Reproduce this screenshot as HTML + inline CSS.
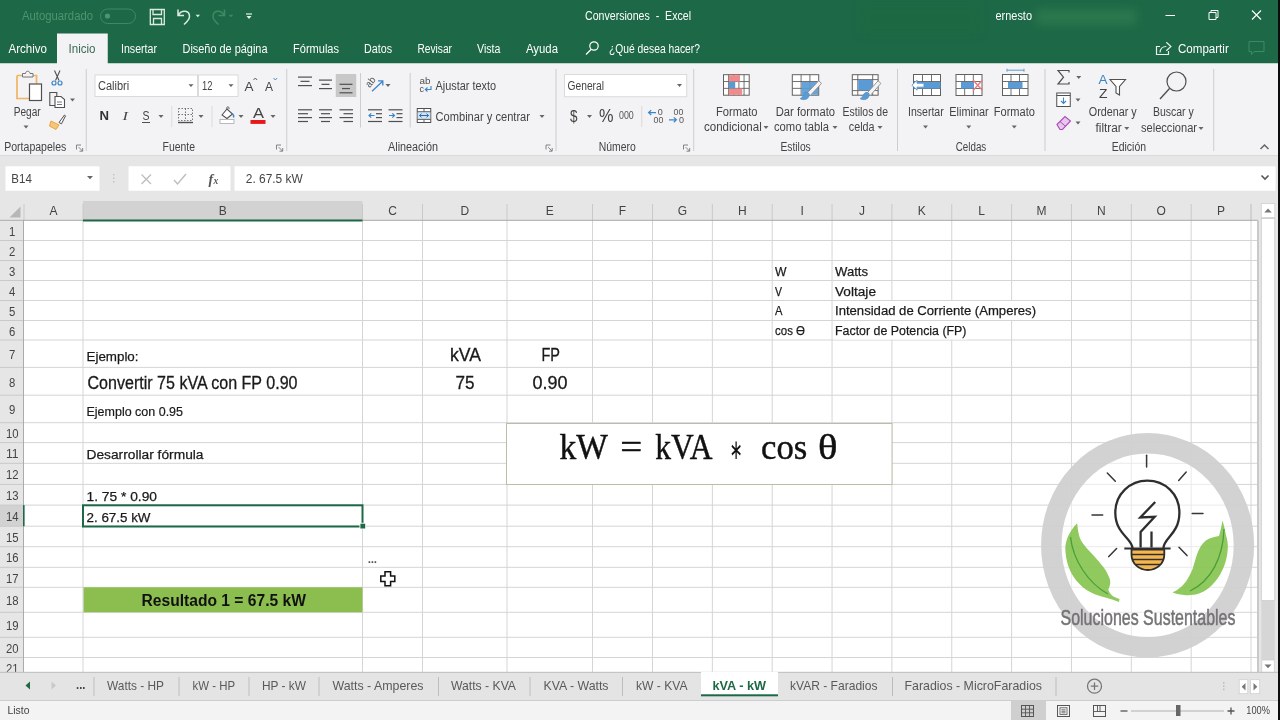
<!DOCTYPE html>
<html lang="es">
<head>
<meta charset="utf-8">
<title>Conversiones - Excel</title>
<style>
html,body{margin:0;padding:0;width:1280px;height:720px;overflow:hidden;background:#fff}
svg{display:block;position:absolute;left:-10px;top:-10px;filter:blur(0.55px)}
svg text{font-family:"Liberation Sans",sans-serif;white-space:pre}
</style>
</head>
<body>
<svg width="1300" height="740" viewBox="-10 -10 1300 740">
<rect x="-10" y="-10" width="1300" height="740" fill="#ffffff" />
<rect x="-10" y="-10" width="1300" height="73.5" fill="#1d6846" />
<defs><filter id="bl" x="-20%" y="-50%" width="140%" height="200%"><feGaussianBlur stdDeviation="4"/></filter></defs>
<rect x="1036" y="9" width="100" height="16" fill="#2a774e" filter="url(#bl)"/>
<rect x="860" y="4" width="120" height="30" fill="#1e6a40" filter="url(#bl)" opacity="0.4"/>
<rect x="-10" y="63.5" width="1300" height="92" fill="#f3f2f4" />
<rect x="-10" y="155.5" width="1300" height="65" fill="#e6e6e6" />
<line x1="-10" y1="155.5" x2="1290" y2="155.5" stroke="#dadada" stroke-width="1" />
<text x="22" y="20" font-size="12" fill="#4f9470" textLength="71" lengthAdjust="spacingAndGlyphs" >Autoguardado</text>
<rect x="100.5" y="9" width="35" height="14.5" rx="7.25" fill="none" stroke="#3f8a63" stroke-width="1"/>
<circle cx="107.5" cy="16" r="2.6" fill="#4f9470"/>
<path d="M150.3 9.5h14v15h-14z M153 9.5v5h8.5v-5 M153.5 24.5v-6h8v6" stroke="#dcebe2" fill="none" stroke-width="1.3" />
<path d="M178 9.5v6h6 M178.5 15c3-5.5 11-5 11 1.5c0 3-2 5-5.5 8" stroke="#dcebe2" fill="none" stroke-width="1.5" />
<path d="M195.55 14.7h4.5l-2.25 2.6z" fill="#dcebe2"/>
<path d="M224.5 9.5v6h-6 M224 15c-3-5.5-11-5-11 1.5c0 3 2 5 5.5 8" stroke="#3f8a63" fill="none" stroke-width="1.5" />
<path d="M228.75 14.7h4.5l-2.25 2.6z" fill="#3f8a63"/>
<line x1="246" y1="14" x2="252" y2="14" stroke="#e8f1ec" stroke-width="1.2" />
<path d="M246.5 16.1h5l-2.5 2.8z" fill="#e8f1ec"/>
<text x="585" y="20" font-size="12" fill="#ffffff" textLength="106" lengthAdjust="spacingAndGlyphs" >Conversiones  -  Excel</text>
<text x="995.5" y="20" font-size="12" fill="#ffffff" textLength="36.5" lengthAdjust="spacingAndGlyphs" >ernesto</text>
<line x1="1165.5" y1="15.5" x2="1175" y2="15.5" stroke="#ffffff" stroke-width="1" />
<path d="M1209 12.5h7v7h-7z M1211 12.5v-2h7v7h-2" stroke="#ffffff" fill="none" stroke-width="1" />
<path d="M1252 10.5l9 9 M1261 10.5l-9 9" stroke="#ffffff" fill="none" stroke-width="1.1" />
<rect x="57" y="33.5" width="50.75" height="31" fill="#f3f2f4" />
<text x="8.5" y="52.8" font-size="12" fill="#ffffff" textLength="38.5" lengthAdjust="spacingAndGlyphs" >Archivo</text>
<text x="68.5" y="52.8" font-size="12" fill="#3b6b55" textLength="27" lengthAdjust="spacingAndGlyphs" >Inicio</text>
<text x="121" y="52.8" font-size="12" fill="#ffffff" textLength="36" lengthAdjust="spacingAndGlyphs" >Insertar</text>
<text x="182.5" y="52.8" font-size="12" fill="#ffffff" textLength="85" lengthAdjust="spacingAndGlyphs" >Diseño de página</text>
<text x="293" y="52.8" font-size="12" fill="#ffffff" textLength="46" lengthAdjust="spacingAndGlyphs" >Fórmulas</text>
<text x="364" y="52.8" font-size="12" fill="#ffffff" textLength="28" lengthAdjust="spacingAndGlyphs" >Datos</text>
<text x="417.5" y="52.8" font-size="12" fill="#ffffff" textLength="34.5" lengthAdjust="spacingAndGlyphs" >Revisar</text>
<text x="477" y="52.8" font-size="12" fill="#ffffff" textLength="23.5" lengthAdjust="spacingAndGlyphs" >Vista</text>
<text x="526" y="52.8" font-size="12" fill="#ffffff" textLength="32" lengthAdjust="spacingAndGlyphs" >Ayuda</text>
<text x="609" y="52.8" font-size="12" fill="#ffffff" textLength="91" lengthAdjust="spacingAndGlyphs" >¿Qué desea hacer?</text>
<circle cx="594" cy="46" r="4.2" fill="none" stroke="#ffffff" stroke-width="1.2"/>
<line x1="591" y1="49.5" x2="586" y2="54.5" stroke="#ffffff" stroke-width="1.3" />
<path d="M1160 46.500h-3.500v8h12v-3.500 M1160 52.500c0.300-4 2.500-6 6.300-6 M1166.300 42.300l4.600 4.200l-4.600 4.200" stroke="#e6f2ea" fill="none" stroke-width="1.2" />
<text x="1178" y="53" font-size="12" fill="#ffffff" textLength="50.75" lengthAdjust="spacingAndGlyphs" >Compartir</text>
<path d="M1249 41.5h15v10h-10l-2.5 3v-3h-2.5z" stroke="#3f8a63" fill="none" stroke-width="1" />
<rect x="5.5" y="166.25" width="94" height="24.5" fill="#ffffff" />
<text x="11.3" y="183.3" font-size="12" fill="#444444" textLength="20.5" lengthAdjust="spacingAndGlyphs" >B14</text>
<path d="M87.0 176.1h6l-3.0 3.2z" fill="#666"/>
<rect x="113.3" y="174" width="1" height="1.4" fill="#b0b0b0" />
<rect x="113.3" y="177.5" width="1" height="1.4" fill="#b0b0b0" />
<rect x="113.3" y="181" width="1" height="1.4" fill="#b0b0b0" />
<rect x="128.5" y="166.25" width="102" height="24.5" fill="#ffffff" />
<path d="M141.5 174.5l9.5 9.5 M151 174.5l-9.5 9.5" stroke="#bdbdbd" fill="none" stroke-width="1.3" />
<path d="M174 180l3.5 4l8.5-10" stroke="#bdbdbd" fill="none" stroke-width="1.4" />
<text x="208.5" y="183.5" font-size="14" fill="#555" font-weight="bold" style='font-family:"Liberation Serif",serif' font-style="italic" >f</text>
<text x="213.5" y="184" font-size="9.5" fill="#555" font-weight="bold" style='font-family:"Liberation Serif",serif' font-style="italic" >x</text>
<rect x="234.5" y="166.25" width="1041" height="24.5" fill="#ffffff" />
<text x="245.75" y="183.3" font-size="12" fill="#444444" textLength="57" lengthAdjust="spacingAndGlyphs" >2. 67.5 kW</text>
<path d="M1261.5 175.5l3.5 3.5l3.5-3.5" stroke="#555" fill="none" stroke-width="1.6" />
<path d="M17 75.5h5.5 M31.5 75.5h5v8 M17 75.5v23h12" stroke="#efb560" fill="none" stroke-width="1.7" />
<path d="M22.5 77v-3.5h3c0-3 4.500-3 4.500 0h3v3.500z" stroke="#777" fill="#f3f3f3" stroke-width="1" />
<rect x="29.5" y="84" width="12" height="16.5" fill="#ffffff" stroke="#505050" stroke-width="1.2"/>
<text x="13.75" y="115.5" font-size="12" fill="#444444" textLength="27" lengthAdjust="spacingAndGlyphs" >Pegar</text>
<path d="M23.5 125.6h5l-2.5 2.8z" fill="#666"/>
<path d="M54.5 70.500l4.500 10 M60 70.500l-4.500 10" stroke="#505050" fill="none" stroke-width="1.1" />
<circle cx="54" cy="83" r="2" fill="none" stroke="#3b86c9" stroke-width="1.2"/><circle cx="60" cy="83" r="2" fill="none" stroke="#3b86c9" stroke-width="1.2"/>
<path d="M49.8 92.500h7v13h-7z" stroke="#505050" fill="none" stroke-width="1.1" />
<path d="M55 96.500h6l3.500 3v8h-9.500z" stroke="#505050" fill="#ffffff" stroke-width="1.1" />
<line x1="57" y1="102" x2="62" y2="102" stroke="#505050" stroke-width="0.8" />
<line x1="57" y1="104.5" x2="62" y2="104.5" stroke="#505050" stroke-width="0.8" />
<path d="M70.0 98.6h5l-2.5 2.8z" fill="#666"/>
<path d="M51 121l8 4l-3 4.500l-6.500-3.500z" stroke="#e8a33d" fill="#f6c777" stroke-width="1" />
<path d="M59 122.500l5.500-7.500l1 0.800l-4 8z" stroke="#505050" fill="#fff" stroke-width="1" />
<text x="4.25" y="150.7" font-size="12" fill="#444444" textLength="62" lengthAdjust="spacingAndGlyphs" >Portapapeles</text>
<path d="M76.5 149.5v-4.5h4.5 M78.7 147.2l3.8 3.8 M82.7 148v3.2h-3.2" stroke="#777" fill="none" stroke-width="0.9" />
<line x1="86.25" y1="69" x2="86.25" y2="151" stroke="#cdcdcd" stroke-width="1" />
<rect x="95" y="75" width="102.5" height="21.5" fill="#ffffff" stroke="#dadada" stroke-width="1"/>
<text x="98" y="90" font-size="12" fill="#444444" textLength="31.25" lengthAdjust="spacingAndGlyphs" >Calibri</text>
<path d="M188.5 84.3h5l-2.5 2.8z" fill="#666"/>
<rect x="198.5" y="75" width="39.5" height="21.5" fill="#ffffff" stroke="#dadada" stroke-width="1"/>
<text x="202" y="90" font-size="12" fill="#444444" textLength="10.5" lengthAdjust="spacingAndGlyphs" >12</text>
<path d="M228.5 84.3h5l-2.5 2.8z" fill="#666"/>
<text x="244.5" y="91" font-size="13.5" fill="#444444" textLength="9" lengthAdjust="spacingAndGlyphs" >A</text>
<path d="M253.5 80l1.800-2l1.800 2" stroke="#505050" fill="none" stroke-width="0.9" />
<text x="265" y="91" font-size="12" fill="#444444" textLength="8" lengthAdjust="spacingAndGlyphs" >A</text>
<path d="M273.500 78l1.800 2l1.800-2" stroke="#3b86c9" fill="none" stroke-width="0.9" />
<text x="99.5" y="120" font-size="13" fill="#333" textLength="9.5" lengthAdjust="spacingAndGlyphs" font-weight="bold" >N</text>
<text x="122.5" y="120" font-size="13" fill="#444" textLength="5.5" lengthAdjust="spacingAndGlyphs" style='font-family:"Liberation Serif",serif' font-style="italic" >I</text>
<text x="142.5" y="119.5" font-size="13" fill="#444444" textLength="7" lengthAdjust="spacingAndGlyphs" >S</text>
<line x1="142" y1="122.5" x2="150" y2="122.5" stroke="#505050" stroke-width="1" />
<path d="M158.5 115.1h5l-2.5 2.8z" fill="#666"/>
<line x1="171.75" y1="106" x2="171.75" y2="127" stroke="#dcdcdc" stroke-width="1" />
<rect x="178.5" y="108.5" width="14" height="12" fill="none" stroke="#777" stroke-width="1" stroke-dasharray="1.5 1.5"/>
<path d="M185.5 108.5v12 M178.5 114.5h14" stroke="#777" fill="none" stroke-width="1" stroke-dasharray="1.5 1.5"/>
<line x1="178" y1="122.5" x2="193" y2="122.5" stroke="#505050" stroke-width="1.4" />
<path d="M198.5 115.1h5l-2.5 2.8z" fill="#666"/>
<line x1="212" y1="106" x2="212" y2="127" stroke="#dcdcdc" stroke-width="1" />
<path d="M222 115l5-6l5.500 5l-5.500 4.500z" stroke="#505050" fill="#fff" stroke-width="1.1" />
<path d="M227 109c-1-3 2.500-3 2 0" stroke="#505050" fill="none" stroke-width="0.9" />
<path d="M232 113.500c1.500 1 2 2.500 1.500 4" stroke="#3b86c9" fill="none" stroke-width="1.4" />
<rect x="220" y="119.5" width="14" height="4" fill="#ffffff" stroke="#aaa" stroke-width="0.8"/>
<path d="M238.5 115.1h5l-2.5 2.8z" fill="#666"/>
<text x="253" y="118.2" font-size="14" fill="#444" textLength="11" lengthAdjust="spacingAndGlyphs" >A</text>
<rect x="250.5" y="120" width="15" height="3.9" fill="#e5191c" />
<path d="M270.5 115.1h5l-2.5 2.8z" fill="#666"/>
<text x="162.5" y="150.7" font-size="12" fill="#444444" textLength="32.5" lengthAdjust="spacingAndGlyphs" >Fuente</text>
<path d="M276.5 149.5v-4.5h4.5 M278.7 147.2l3.8 3.8 M282.7 148v3.2h-3.2" stroke="#777" fill="none" stroke-width="0.9" />
<line x1="286.75" y1="69" x2="286.75" y2="151" stroke="#cdcdcd" stroke-width="1" />
<rect x="298" y="76.5" width="14" height="1.2" fill="#505050" />
<rect x="300.5" y="80.75" width="9" height="1.2" fill="#505050" />
<rect x="298" y="85.0" width="14" height="1.2" fill="#505050" />
<rect x="319" y="79.5" width="13" height="1.2" fill="#505050" />
<rect x="321.5" y="83.75" width="8" height="1.2" fill="#505050" />
<rect x="319" y="88.0" width="13" height="1.2" fill="#505050" />
<rect x="335.75" y="74" width="20.5" height="23" fill="#c8c8c8" />
<rect x="339.5" y="83.7" width="13" height="1.2" fill="#505050" />
<rect x="342.0" y="87.95" width="8" height="1.2" fill="#505050" />
<rect x="339.5" y="92.2" width="13" height="1.2" fill="#505050" />
<line x1="360.5" y1="73" x2="360.5" y2="127.5" stroke="#cdcdcd" stroke-width="1" />
<text x="369.8" y="88.2" font-size="10" fill="#505050" textLength="10.5" lengthAdjust="spacingAndGlyphs" transform="rotate(-52 369.8 88.2)">ab</text>
<path d="M372 91.200l10.400-9.700 M378 80.800h4.800v4.800" stroke="#3b86c9" fill="none" stroke-width="1.3" />
<path d="M385.5 84.1h5l-2.5 2.8z" fill="#666"/>
<line x1="410.2" y1="73" x2="410.2" y2="127.5" stroke="#cdcdcd" stroke-width="1" />
<text x="419.5" y="84" font-size="8.5" fill="#505050" textLength="11" lengthAdjust="spacingAndGlyphs" >ab</text>
<text x="419.5" y="91.5" font-size="8.5" fill="#505050" textLength="4.5" lengthAdjust="spacingAndGlyphs" >c</text>
<path d="M431 86v3.500h-5.500 M427.500 87.500l-2.200 2l2.200 2" stroke="#3b86c9" fill="none" stroke-width="1.1" />
<text x="435.5" y="90" font-size="12" fill="#444444" textLength="60.5" lengthAdjust="spacingAndGlyphs" >Ajustar texto</text>
<rect x="298" y="109.2" width="14" height="1.2" fill="#505050" />
<rect x="298" y="113.10000000000001" width="10" height="1.2" fill="#505050" />
<rect x="298" y="117.0" width="14" height="1.2" fill="#505050" />
<rect x="298" y="120.9" width="10" height="1.2" fill="#505050" />
<rect x="319" y="109.2" width="13" height="1.2" fill="#505050" />
<rect x="321" y="113.10000000000001" width="9" height="1.2" fill="#505050" />
<rect x="319" y="117.0" width="13" height="1.2" fill="#505050" />
<rect x="321" y="120.9" width="9" height="1.2" fill="#505050" />
<rect x="339.5" y="109.2" width="13.5" height="1.2" fill="#505050" />
<rect x="343.5" y="113.10000000000001" width="9.5" height="1.2" fill="#505050" />
<rect x="339.5" y="117.0" width="13.5" height="1.2" fill="#505050" />
<rect x="343.5" y="120.9" width="9.5" height="1.2" fill="#505050" />
<rect x="475" y="109.2" width="0" height="1.2" fill="#505050" />
<rect x="376" y="113.10000000000001" width="6" height="1.2" fill="#505050" />
<rect x="376" y="117.0" width="6" height="1.2" fill="#505050" />
<rect x="475" y="120.9" width="0" height="1.2" fill="#505050" />
<rect x="368" y="109.2" width="14" height="1.2" fill="#505050" />
<rect x="467" y="113.10000000000001" width="0" height="1.2" fill="#505050" />
<rect x="467" y="117.0" width="0" height="1.2" fill="#505050" />
<rect x="368" y="120.9" width="14" height="1.2" fill="#505050" />
<path d="M374.500 115.500h-5.500 M371.200 113.300l-2.200 2.200l2.200 2.200" stroke="#3b86c9" fill="none" stroke-width="1.2" />
<rect x="495.5" y="109.2" width="0" height="1.2" fill="#505050" />
<rect x="396.5" y="113.10000000000001" width="6" height="1.2" fill="#505050" />
<rect x="396.5" y="117.0" width="6" height="1.2" fill="#505050" />
<rect x="495.5" y="120.9" width="0" height="1.2" fill="#505050" />
<rect x="388.5" y="109.2" width="14" height="1.2" fill="#505050" />
<rect x="487.5" y="113.10000000000001" width="0" height="1.2" fill="#505050" />
<rect x="487.5" y="117.0" width="0" height="1.2" fill="#505050" />
<rect x="388.5" y="120.9" width="14" height="1.2" fill="#505050" />
<path d="M389 115.500h5.500 M392.300 113.300l2.200 2.200l-2.200 2.200" stroke="#3b86c9" fill="none" stroke-width="1.2" />
<rect x="417.250" y="108.500" width="13.500" height="14" fill="#ffffff" stroke="#505050" stroke-width="1"/>
<rect x="417.75" y="111.8" width="12.5" height="7.6" fill="#cfe3f5" />
<path d="M417.250 111.700h13.500 M417.250 119.400h13.500 M424 108.500v3.200 M424 119.400v3.100" stroke="#505050" fill="none" stroke-width="0.9" />
<path d="M419.500 115.500h9 M421.500 113.700l-2 1.800l2 1.800 M426.500 113.700l2 1.800l-2 1.800" stroke="#2b6cb0" fill="none" stroke-width="1" />
<text x="435.5" y="120.75" font-size="12" fill="#444444" textLength="94.5" lengthAdjust="spacingAndGlyphs" >Combinar y centrar</text>
<path d="M539.5 115.1h5l-2.5 2.8z" fill="#666"/>
<text x="388" y="150.7" font-size="12" fill="#444444" textLength="50" lengthAdjust="spacingAndGlyphs" >Alineación</text>
<path d="M546 149.5v-4.5h4.5 M548.2 147.2l3.8 3.8 M552.2 148v3.2h-3.2" stroke="#777" fill="none" stroke-width="0.9" />
<line x1="556" y1="69" x2="556" y2="151" stroke="#cdcdcd" stroke-width="1" />
<rect x="564.5" y="74.5" width="122.25" height="22.25" fill="#ffffff" stroke="#dadada" stroke-width="1"/>
<text x="567.5" y="90" font-size="12" fill="#444444" textLength="36.5" lengthAdjust="spacingAndGlyphs" >General</text>
<path d="M677.0 84.1h5l-2.5 2.8z" fill="#666"/>
<text x="570" y="121.7" font-size="17" fill="#444" textLength="7.5" lengthAdjust="spacingAndGlyphs" >$</text>
<path d="M587.0 115.1h5l-2.5 2.8z" fill="#666"/>
<text x="599" y="121.8" font-size="17.5" fill="#444" textLength="14.5" lengthAdjust="spacingAndGlyphs" >%</text>
<text x="619" y="119" font-size="10" fill="#555" textLength="14.75" lengthAdjust="spacingAndGlyphs" >000</text>
<line x1="641.75" y1="106" x2="641.75" y2="127" stroke="#d8d8d8" stroke-width="1" />
<path d="M656 112.600h-7.500 M651.200 110.200l-2.600 2.400l2.600 2.400" stroke="#3b86c9" fill="none" stroke-width="1.2" />
<text x="657.8" y="115" font-size="9" fill="#555" textLength="5" lengthAdjust="spacingAndGlyphs" >0</text>
<text x="653.5" y="123.2" font-size="9" fill="#555" textLength="9.8" lengthAdjust="spacingAndGlyphs" >00</text>
<text x="673.5" y="115" font-size="9" fill="#555" textLength="9.8" lengthAdjust="spacingAndGlyphs" >00</text>
<text x="679" y="123.2" font-size="9" fill="#555" textLength="5" lengthAdjust="spacingAndGlyphs" >0</text>
<path d="M669 119.800h7.500 M673.800 117.400l2.600 2.400l-2.600 2.400" stroke="#3b86c9" fill="none" stroke-width="1.2" />
<text x="598.75" y="150.7" font-size="12" fill="#444444" textLength="37" lengthAdjust="spacingAndGlyphs" >Número</text>
<path d="M683.5 149.5v-4.5h4.5 M685.7 147.2l3.8 3.8 M689.7 148v3.2h-3.2" stroke="#777" fill="none" stroke-width="0.9" />
<line x1="693.75" y1="69" x2="693.75" y2="151" stroke="#cdcdcd" stroke-width="1" />
<rect x="723.5" y="74.7" width="25.7" height="20.5" fill="#ffffff" stroke="#606060" stroke-width="1"/>
<line x1="728.64" y1="74.7" x2="728.64" y2="95.2" stroke="#606060" stroke-width="0.9" />
<line x1="733.78" y1="74.7" x2="733.78" y2="95.2" stroke="#606060" stroke-width="0.9" />
<line x1="738.92" y1="74.7" x2="738.92" y2="95.2" stroke="#606060" stroke-width="0.9" />
<line x1="744.06" y1="74.7" x2="744.06" y2="95.2" stroke="#606060" stroke-width="0.9" />
<line x1="723.5" y1="81.53333333333333" x2="749.2" y2="81.53333333333333" stroke="#606060" stroke-width="0.9" />
<line x1="723.5" y1="88.36666666666667" x2="749.2" y2="88.36666666666667" stroke="#606060" stroke-width="0.9" />
<rect x="728.9" y="75.2" width="11" height="6.4" fill="#f28a8c" />
<rect x="728.9" y="88.6" width="13.3" height="6.2" fill="#f28a8c" />
<rect x="728.9" y="81.8" width="6.3" height="6.6" fill="#5b9bd5" />
<text x="716" y="115.5" font-size="12" fill="#444444" textLength="41.5" lengthAdjust="spacingAndGlyphs" >Formato</text>
<text x="704" y="131" font-size="12" fill="#444444" textLength="57.75" lengthAdjust="spacingAndGlyphs" >condicional</text>
<path d="M763.5 126.1h5l-2.5 2.8z" fill="#666"/>
<rect x="792.3" y="74.7" width="26.4" height="20.5" fill="#ffffff" stroke="#606060" stroke-width="1"/>
<line x1="801.0999999999999" y1="74.7" x2="801.0999999999999" y2="95.2" stroke="#606060" stroke-width="0.9" />
<line x1="809.9" y1="74.7" x2="809.9" y2="95.2" stroke="#606060" stroke-width="0.9" />
<line x1="792.3" y1="81.53333333333333" x2="818.6999999999999" y2="81.53333333333333" stroke="#606060" stroke-width="0.9" />
<line x1="792.3" y1="88.36666666666667" x2="818.6999999999999" y2="88.36666666666667" stroke="#606060" stroke-width="0.9" />
<rect x="801.6" y="82" width="16.6" height="12.7" fill="#5b9bd5" opacity="0.92"/>
<path d="M818.6999999999999 80.8L821.5 83.4L810.0 95.8L807.0 93.19999999999999z" stroke="#8c8c8c" fill="#f4f4f4" stroke-width="0.9" />
<path d="M809.4 94.2c-1-2-3.500-2.500-5-1c-1.500 1.500-1.500 4-4.400 5.500c4 2 9 1 9.400-4.500z" stroke="#4a86c0" fill="#5b9bd5" stroke-width="0.5" />
<text x="775.75" y="115.5" font-size="12" fill="#444444" textLength="59.25" lengthAdjust="spacingAndGlyphs" >Dar formato</text>
<text x="774" y="131" font-size="12" fill="#444444" textLength="55" lengthAdjust="spacingAndGlyphs" >como tabla</text>
<path d="M832.5 126.1h5l-2.5 2.8z" fill="#666"/>
<rect x="852.300" y="74.700" width="25.800" height="20.500" fill="#ffffff" stroke="#606060" stroke-width="1"/>
<path d="M857.800 74.700v20.500 M872.700 74.700v20.500 M852.300 79.600h25.800 M852.300 90.600h25.800" stroke="#606060" fill="none" stroke-width="0.9" />
<rect x="858.2" y="80" width="14.1" height="10.2" fill="#5b9bd5" />
<path d="M878.1 80.8L880.9000000000001 83.4L870.0 95.8L867.0 93.19999999999999z" stroke="#8c8c8c" fill="#f4f4f4" stroke-width="0.9" />
<path d="M869.4 94.2c-1-2-3.500-2.500-5-1c-1.500 1.500-1.500 4-4.400 5.500c4 2 9 1 9.400-4.500z" stroke="#4a86c0" fill="#5b9bd5" stroke-width="0.5" />
<text x="842.5" y="115.5" font-size="12" fill="#444444" textLength="45.5" lengthAdjust="spacingAndGlyphs" >Estilos de</text>
<text x="848.75" y="131" font-size="12" fill="#444444" textLength="25.75" lengthAdjust="spacingAndGlyphs" >celda</text>
<path d="M877.5 126.1h5l-2.5 2.8z" fill="#666"/>
<text x="780.5" y="150.7" font-size="12" fill="#444444" textLength="30.25" lengthAdjust="spacingAndGlyphs" >Estilos</text>
<line x1="897.5" y1="69" x2="897.5" y2="151" stroke="#cdcdcd" stroke-width="1" />
<rect x="913.5" y="74.5" width="27" height="21" fill="#ffffff" stroke="#606060" stroke-width="1"/>
<line x1="922.5" y1="74.5" x2="922.5" y2="95.5" stroke="#606060" stroke-width="0.9" />
<line x1="931.5" y1="74.5" x2="931.5" y2="95.5" stroke="#606060" stroke-width="0.9" />
<line x1="913.5" y1="81.5" x2="940.5" y2="81.5" stroke="#606060" stroke-width="0.9" />
<line x1="913.5" y1="88.5" x2="940.5" y2="88.5" stroke="#606060" stroke-width="0.9" />
<rect x="917" y="82" width="23.5" height="6.5" fill="#5b9bd5" />
<path d="M912 85.200l5-5v3h7v4h-7v3z" stroke="#5b9bd5" fill="#ffffff" stroke-width="1" />
<text x="908" y="115.5" font-size="12" fill="#444444" textLength="35.75" lengthAdjust="spacingAndGlyphs" >Insertar</text>
<path d="M923.0 125.6h5l-2.5 2.8z" fill="#666"/>
<rect x="956" y="74.5" width="26" height="21" fill="#ffffff" stroke="#606060" stroke-width="1"/>
<line x1="964.6666666666666" y1="74.5" x2="964.6666666666666" y2="95.5" stroke="#606060" stroke-width="0.9" />
<line x1="973.3333333333334" y1="74.5" x2="973.3333333333334" y2="95.5" stroke="#606060" stroke-width="0.9" />
<line x1="956" y1="81.5" x2="982" y2="81.5" stroke="#606060" stroke-width="0.9" />
<line x1="956" y1="88.5" x2="982" y2="88.5" stroke="#606060" stroke-width="0.9" />
<rect x="961" y="82" width="13" height="6.5" fill="#5b9bd5" />
<path d="M973 80l9.500 10.500 M982.500 80l-9.500 10.500" stroke="#f0787a" fill="none" stroke-width="1.4" />
<text x="949.25" y="115.5" font-size="12" fill="#444444" textLength="39.5" lengthAdjust="spacingAndGlyphs" >Eliminar</text>
<path d="M966.25 125.6h5l-2.5 2.8z" fill="#666"/>
<rect x="1002.5" y="74.5" width="25.5" height="21" fill="#ffffff" stroke="#606060" stroke-width="1"/>
<line x1="1011.0" y1="74.5" x2="1011.0" y2="95.5" stroke="#606060" stroke-width="0.9" />
<line x1="1019.5" y1="74.5" x2="1019.5" y2="95.5" stroke="#606060" stroke-width="0.9" />
<line x1="1002.5" y1="81.5" x2="1028.0" y2="81.5" stroke="#606060" stroke-width="0.9" />
<line x1="1002.5" y1="88.5" x2="1028.0" y2="88.5" stroke="#606060" stroke-width="0.9" />
<rect x="1008" y="82" width="14.5" height="6.5" fill="#5b9bd5" />
<path d="M1007 70.200h17 M1007 68.700v3 M1024 68.700v3" stroke="#5b9bd5" fill="none" stroke-width="1" />
<text x="993.75" y="115.5" font-size="12" fill="#444444" textLength="41.25" lengthAdjust="spacingAndGlyphs" >Formato</text>
<path d="M1011.75 125.6h5l-2.5 2.8z" fill="#666"/>
<text x="955.75" y="150.7" font-size="12" fill="#444444" textLength="30.5" lengthAdjust="spacingAndGlyphs" >Celdas</text>
<line x1="1045" y1="69" x2="1045" y2="151" stroke="#cdcdcd" stroke-width="1" />
<path d="M1069 72.500v-2h-11l5.500 6.700l-5.500 6.800h11v-2" stroke="#505050" fill="none" stroke-width="1.2" />
<path d="M1076.25 76.1h5l-2.5 2.8z" fill="#666"/>
<rect x="1056.750" y="93" width="13.500" height="13.500" fill="#ffffff" stroke="#505050" stroke-width="1"/>
<line x1="1056.75" y1="95.5" x2="1070.25" y2="95.5" stroke="#505050" stroke-width="1" />
<path d="M1063.500 97.500v6 M1061 101l2.500 2.500l2.500-2.500" stroke="#3b86c9" fill="none" stroke-width="1.1" />
<path d="M1075.5 98.6h5l-2.5 2.8z" fill="#666"/>
<path d="M1057 124.500l8-8l5.500 4.500l-8 8.500h-2.500z" stroke="#a64fb5" fill="#e9c6ee" stroke-width="1.1" />
<path d="M1060 121.500l5.500 4.800" stroke="#a64fb5" fill="none" stroke-width="1" />
<path d="M1075.5 121.6h5l-2.5 2.8z" fill="#666"/>
<text x="1098.5" y="83.5" font-size="13" fill="#3b86c9" textLength="9" lengthAdjust="spacingAndGlyphs" >A</text>
<text x="1099" y="97.5" font-size="13" fill="#444" textLength="8.5" lengthAdjust="spacingAndGlyphs" >Z</text>
<path d="M1110 79.500h15.500l-6 7v8.500l-3.500-2v-6.500z" stroke="#505050" fill="#fff" stroke-width="1.1" />
<text x="1088.75" y="116" font-size="12" fill="#444444" textLength="48" lengthAdjust="spacingAndGlyphs" >Ordenar y</text>
<text x="1095.5" y="132" font-size="12" fill="#444444" textLength="26.25" lengthAdjust="spacingAndGlyphs" >filtrar</text>
<path d="M1124.25 127.1h5l-2.5 2.8z" fill="#666"/>
<circle cx="1176.500" cy="81.500" r="9.500" fill="none" stroke="#505050" stroke-width="1.2"/>
<line x1="1169.5" y1="88.5" x2="1160" y2="99" stroke="#505050" stroke-width="1.4" />
<text x="1153" y="116" font-size="12" fill="#444444" textLength="40.75" lengthAdjust="spacingAndGlyphs" >Buscar y</text>
<text x="1141" y="132" font-size="12" fill="#444444" textLength="56" lengthAdjust="spacingAndGlyphs" >seleccionar</text>
<path d="M1198.5 127.1h5l-2.5 2.8z" fill="#666"/>
<text x="1111.75" y="150.7" font-size="12" fill="#444444" textLength="34.25" lengthAdjust="spacingAndGlyphs" >Edición</text>
<line x1="1213.75" y1="69" x2="1213.75" y2="151" stroke="#cdcdcd" stroke-width="1" />
<path d="M1260.500 149l4-4l4 4" stroke="#666" fill="none" stroke-width="1.5" />
<rect x="-10" y="201" width="1271" height="19.5" fill="#e6e6e6" />
<rect x="-10" y="220.5" width="34" height="451.79999999999995" fill="#e6e6e6" />
<rect x="83" y="201" width="279.5" height="19" fill="#d2d2d2" />
<rect x="-10" y="505.1" width="34" height="21.100000000000023" fill="#d2d2d2" />
<rect x="1257.5" y="201" width="20.5" height="471.29999999999995" fill="#e6e6e6" />
<rect x="24" y="240.0" width="1233.5" height="1" fill="#d5d4d7" />
<rect x="24" y="260.0" width="1233.5" height="1" fill="#d5d4d7" />
<rect x="24" y="280.0" width="1233.5" height="1" fill="#d5d4d7" />
<rect x="24" y="300.0" width="1233.5" height="1" fill="#d5d4d7" />
<rect x="24" y="320.0" width="1233.5" height="1" fill="#d5d4d7" />
<rect x="24" y="339.5" width="1233.5" height="1" fill="#d5d4d7" />
<rect x="24" y="366.9" width="1233.5" height="1" fill="#d5d4d7" />
<rect x="24" y="394.7" width="1233.5" height="1" fill="#d5d4d7" />
<rect x="24" y="422.2" width="1233.5" height="1" fill="#d5d4d7" />
<rect x="24" y="442.1" width="1233.5" height="1" fill="#d5d4d7" />
<rect x="24" y="462.8" width="1233.5" height="1" fill="#d5d4d7" />
<rect x="24" y="483.9" width="1233.5" height="1" fill="#d5d4d7" />
<rect x="24" y="504.6" width="1233.5" height="1" fill="#d5d4d7" />
<rect x="24" y="525.7" width="1233.5" height="1" fill="#d5d4d7" />
<rect x="24" y="546.2" width="1233.5" height="1" fill="#d5d4d7" />
<rect x="24" y="566.8" width="1233.5" height="1" fill="#d5d4d7" />
<rect x="24" y="586.8" width="1233.5" height="1" fill="#d5d4d7" />
<rect x="24" y="611.8" width="1233.5" height="1" fill="#d5d4d7" />
<rect x="24" y="636.8" width="1233.5" height="1" fill="#d5d4d7" />
<rect x="24" y="657.0" width="1233.5" height="1" fill="#d5d4d7" />
<rect x="82.5" y="220.5" width="1" height="451.79999999999995" fill="#d5d4d7" />
<rect x="362.0" y="220.5" width="1" height="451.79999999999995" fill="#d5d4d7" />
<rect x="422.0" y="220.5" width="1" height="451.79999999999995" fill="#d5d4d7" />
<rect x="506.5" y="220.5" width="1" height="451.79999999999995" fill="#d5d4d7" />
<rect x="592.0" y="220.5" width="1" height="451.79999999999995" fill="#d5d4d7" />
<rect x="652.0" y="220.5" width="1" height="451.79999999999995" fill="#d5d4d7" />
<rect x="711.85" y="220.5" width="1" height="451.79999999999995" fill="#d5d4d7" />
<rect x="771.7" y="220.5" width="1" height="451.79999999999995" fill="#d5d4d7" />
<rect x="831.55" y="220.5" width="1" height="451.79999999999995" fill="#d5d4d7" />
<rect x="891.4" y="220.5" width="1" height="451.79999999999995" fill="#d5d4d7" />
<rect x="951.25" y="220.5" width="1" height="451.79999999999995" fill="#d5d4d7" />
<rect x="1011.1" y="220.5" width="1" height="451.79999999999995" fill="#d5d4d7" />
<rect x="1070.95" y="220.5" width="1" height="451.79999999999995" fill="#d5d4d7" />
<rect x="1130.8" y="220.5" width="1" height="451.79999999999995" fill="#d5d4d7" />
<rect x="1190.65" y="220.5" width="1" height="451.79999999999995" fill="#d5d4d7" />
<rect x="1250.5" y="220.5" width="1" height="451.79999999999995" fill="#d5d4d7" />
<rect x="23.5" y="204" width="1" height="16.5" fill="#c9c9c9" />
<rect x="82.5" y="204" width="1" height="16.5" fill="#c9c9c9" />
<rect x="362.0" y="204" width="1" height="16.5" fill="#c9c9c9" />
<rect x="422.0" y="204" width="1" height="16.5" fill="#c9c9c9" />
<rect x="506.5" y="204" width="1" height="16.5" fill="#c9c9c9" />
<rect x="592.0" y="204" width="1" height="16.5" fill="#c9c9c9" />
<rect x="652.0" y="204" width="1" height="16.5" fill="#c9c9c9" />
<rect x="711.85" y="204" width="1" height="16.5" fill="#c9c9c9" />
<rect x="771.7" y="204" width="1" height="16.5" fill="#c9c9c9" />
<rect x="831.55" y="204" width="1" height="16.5" fill="#c9c9c9" />
<rect x="891.4" y="204" width="1" height="16.5" fill="#c9c9c9" />
<rect x="951.25" y="204" width="1" height="16.5" fill="#c9c9c9" />
<rect x="1011.1" y="204" width="1" height="16.5" fill="#c9c9c9" />
<rect x="1070.95" y="204" width="1" height="16.5" fill="#c9c9c9" />
<rect x="1130.8" y="204" width="1" height="16.5" fill="#c9c9c9" />
<rect x="1190.65" y="204" width="1" height="16.5" fill="#c9c9c9" />
<rect x="1250.5" y="204" width="1" height="16.5" fill="#c9c9c9" />
<rect x="1250.5" y="204" width="1" height="16.5" fill="#c9c9c9" />
<rect x="-10" y="240.0" width="34" height="1" fill="#c9c9c9" />
<rect x="-10" y="260.0" width="34" height="1" fill="#c9c9c9" />
<rect x="-10" y="280.0" width="34" height="1" fill="#c9c9c9" />
<rect x="-10" y="300.0" width="34" height="1" fill="#c9c9c9" />
<rect x="-10" y="320.0" width="34" height="1" fill="#c9c9c9" />
<rect x="-10" y="339.5" width="34" height="1" fill="#c9c9c9" />
<rect x="-10" y="366.9" width="34" height="1" fill="#c9c9c9" />
<rect x="-10" y="394.7" width="34" height="1" fill="#c9c9c9" />
<rect x="-10" y="422.2" width="34" height="1" fill="#c9c9c9" />
<rect x="-10" y="442.1" width="34" height="1" fill="#c9c9c9" />
<rect x="-10" y="462.8" width="34" height="1" fill="#c9c9c9" />
<rect x="-10" y="483.9" width="34" height="1" fill="#c9c9c9" />
<rect x="-10" y="504.6" width="34" height="1" fill="#c9c9c9" />
<rect x="-10" y="525.7" width="34" height="1" fill="#c9c9c9" />
<rect x="-10" y="546.2" width="34" height="1" fill="#c9c9c9" />
<rect x="-10" y="566.8" width="34" height="1" fill="#c9c9c9" />
<rect x="-10" y="586.8" width="34" height="1" fill="#c9c9c9" />
<rect x="-10" y="611.8" width="34" height="1" fill="#c9c9c9" />
<rect x="-10" y="636.8" width="34" height="1" fill="#c9c9c9" />
<rect x="-10" y="657.0" width="34" height="1" fill="#c9c9c9" />
<rect x="23" y="220.5" width="1" height="451.79999999999995" fill="#ababab" />
<rect x="-10" y="219.8" width="1268" height="1" fill="#ababab" />
<path d="M20.5 206.500v11h-11z" stroke="none" fill="#b7b7b7" stroke-width="1" />
<text x="53.5" y="215.2" font-size="12" fill="#444444" text-anchor="middle" >A</text>
<text x="222.75" y="215.2" font-size="12" fill="#444444" text-anchor="middle" >B</text>
<text x="392.5" y="215.2" font-size="12" fill="#444444" text-anchor="middle" >C</text>
<text x="464.75" y="215.2" font-size="12" fill="#444444" text-anchor="middle" >D</text>
<text x="549.75" y="215.2" font-size="12" fill="#444444" text-anchor="middle" >E</text>
<text x="622.5" y="215.2" font-size="12" fill="#444444" text-anchor="middle" >F</text>
<text x="682.425" y="215.2" font-size="12" fill="#444444" text-anchor="middle" >G</text>
<text x="742.2750000000001" y="215.2" font-size="12" fill="#444444" text-anchor="middle" >H</text>
<text x="802.125" y="215.2" font-size="12" fill="#444444" text-anchor="middle" >I</text>
<text x="861.9749999999999" y="215.2" font-size="12" fill="#444444" text-anchor="middle" >J</text>
<text x="921.825" y="215.2" font-size="12" fill="#444444" text-anchor="middle" >K</text>
<text x="981.675" y="215.2" font-size="12" fill="#444444" text-anchor="middle" >L</text>
<text x="1041.525" y="215.2" font-size="12" fill="#444444" text-anchor="middle" >M</text>
<text x="1101.375" y="215.2" font-size="12" fill="#444444" text-anchor="middle" >N</text>
<text x="1161.225" y="215.2" font-size="12" fill="#444444" text-anchor="middle" >O</text>
<text x="1221.075" y="215.2" font-size="12" fill="#444444" text-anchor="middle" >P</text>
<text x="12.2" y="235.9" font-size="12" fill="#444444" textLength="6.3" lengthAdjust="spacingAndGlyphs" text-anchor="middle" >1</text>
<text x="12.2" y="255.9" font-size="12" fill="#444444" textLength="6.3" lengthAdjust="spacingAndGlyphs" text-anchor="middle" >2</text>
<text x="12.2" y="275.9" font-size="12" fill="#444444" textLength="6.3" lengthAdjust="spacingAndGlyphs" text-anchor="middle" >3</text>
<text x="12.2" y="295.9" font-size="12" fill="#444444" textLength="6.3" lengthAdjust="spacingAndGlyphs" text-anchor="middle" >4</text>
<text x="12.2" y="315.9" font-size="12" fill="#444444" textLength="6.3" lengthAdjust="spacingAndGlyphs" text-anchor="middle" >5</text>
<text x="12.2" y="335.65" font-size="12" fill="#444444" textLength="6.3" lengthAdjust="spacingAndGlyphs" text-anchor="middle" >6</text>
<text x="12.2" y="359.09999999999997" font-size="12" fill="#444444" textLength="6.3" lengthAdjust="spacingAndGlyphs" text-anchor="middle" >7</text>
<text x="12.2" y="386.69999999999993" font-size="12" fill="#444444" textLength="6.3" lengthAdjust="spacingAndGlyphs" text-anchor="middle" >8</text>
<text x="12.2" y="414.34999999999997" font-size="12" fill="#444444" textLength="6.3" lengthAdjust="spacingAndGlyphs" text-anchor="middle" >9</text>
<text x="12.2" y="438.04999999999995" font-size="12" fill="#444444" textLength="12.6" lengthAdjust="spacingAndGlyphs" text-anchor="middle" >10</text>
<text x="12.2" y="458.35" font-size="12" fill="#444444" textLength="12.6" lengthAdjust="spacingAndGlyphs" text-anchor="middle" >11</text>
<text x="12.2" y="479.25" font-size="12" fill="#444444" textLength="12.6" lengthAdjust="spacingAndGlyphs" text-anchor="middle" >12</text>
<text x="12.2" y="500.15" font-size="12" fill="#444444" textLength="12.6" lengthAdjust="spacingAndGlyphs" text-anchor="middle" >13</text>
<text x="12.2" y="521.0500000000001" font-size="12" fill="#444444" textLength="12.6" lengthAdjust="spacingAndGlyphs" text-anchor="middle" >14</text>
<text x="12.2" y="541.85" font-size="12" fill="#444444" textLength="12.6" lengthAdjust="spacingAndGlyphs" text-anchor="middle" >15</text>
<text x="12.2" y="562.4" font-size="12" fill="#444444" textLength="12.6" lengthAdjust="spacingAndGlyphs" text-anchor="middle" >16</text>
<text x="12.2" y="582.6999999999999" font-size="12" fill="#444444" textLength="12.6" lengthAdjust="spacingAndGlyphs" text-anchor="middle" >17</text>
<text x="12.2" y="605.1999999999999" font-size="12" fill="#444444" textLength="12.6" lengthAdjust="spacingAndGlyphs" text-anchor="middle" >18</text>
<text x="12.2" y="630.1999999999999" font-size="12" fill="#444444" textLength="12.6" lengthAdjust="spacingAndGlyphs" text-anchor="middle" >19</text>
<text x="12.2" y="652.8" font-size="12" fill="#444444" textLength="12.6" lengthAdjust="spacingAndGlyphs" text-anchor="middle" >20</text>
<text x="12.2" y="672.9" font-size="12" fill="#444444" textLength="12.6" lengthAdjust="spacingAndGlyphs" text-anchor="middle" >21</text>
<rect x="83" y="219.5" width="279.5" height="2" fill="#1d6846" />
<rect x="23" y="505.1" width="1.6" height="21.100000000000023" fill="#1d6846" />
<rect x="833.5" y="301" width="203" height="19" fill="#ffffff" />
<rect x="833.5" y="321" width="134" height="18.5" fill="#ffffff" />
<text x="775" y="275.8" font-size="13.7" fill="#1a1a1a" textLength="11.5" lengthAdjust="spacingAndGlyphs" stroke="#1a1a1a" stroke-width="0.25">W</text>
<text x="835" y="275.8" font-size="13.7" fill="#1a1a1a" textLength="33" lengthAdjust="spacingAndGlyphs" stroke="#1a1a1a" stroke-width="0.25">Watts</text>
<text x="775" y="295.5" font-size="13.7" fill="#1a1a1a" textLength="7" lengthAdjust="spacingAndGlyphs" stroke="#1a1a1a" stroke-width="0.25">V</text>
<text x="835" y="295.5" font-size="13.7" fill="#1a1a1a" textLength="41" lengthAdjust="spacingAndGlyphs" stroke="#1a1a1a" stroke-width="0.25">Voltaje</text>
<text x="775" y="315" font-size="13.7" fill="#1a1a1a" textLength="7.5" lengthAdjust="spacingAndGlyphs" stroke="#1a1a1a" stroke-width="0.25">A</text>
<text x="835" y="315" font-size="13.7" fill="#1a1a1a" textLength="201" lengthAdjust="spacingAndGlyphs" stroke="#1a1a1a" stroke-width="0.25">Intensidad de Corriente (Amperes)</text>
<text x="775" y="334.6" font-size="13.7" fill="#1a1a1a" textLength="30" lengthAdjust="spacingAndGlyphs" stroke="#1a1a1a" stroke-width="0.25">cos ϴ</text>
<text x="835" y="334.6" font-size="13.7" fill="#1a1a1a" textLength="131.5" lengthAdjust="spacingAndGlyphs" stroke="#1a1a1a" stroke-width="0.25">Factor de Potencia (FP)</text>
<text x="86.5" y="361" font-size="13.7" fill="#1a1a1a" textLength="52" lengthAdjust="spacingAndGlyphs" stroke="#1a1a1a" stroke-width="0.25">Ejemplo:</text>
<text x="450" y="361" font-size="17.6" fill="#1a1a1a" textLength="31" lengthAdjust="spacingAndGlyphs" stroke="#1a1a1a" stroke-width="0.3">kVA</text>
<text x="541.5" y="361" font-size="17.6" fill="#1a1a1a" textLength="18.5" lengthAdjust="spacingAndGlyphs" stroke="#1a1a1a" stroke-width="0.3">FP</text>
<text x="87.5" y="389" font-size="17.6" fill="#1a1a1a" textLength="210" lengthAdjust="spacingAndGlyphs" stroke="#1a1a1a" stroke-width="0.3">Convertir 75 kVA con FP 0.90</text>
<text x="455.5" y="389" font-size="17.6" fill="#1a1a1a" textLength="19" lengthAdjust="spacingAndGlyphs" stroke="#1a1a1a" stroke-width="0.3">75</text>
<text x="532.5" y="389" font-size="17.6" fill="#1a1a1a" textLength="35" lengthAdjust="spacingAndGlyphs" stroke="#1a1a1a" stroke-width="0.3">0.90</text>
<text x="86.5" y="416" font-size="12.4" fill="#1a1a1a" textLength="96.5" lengthAdjust="spacingAndGlyphs" stroke="#1a1a1a" stroke-width="0.2">Ejemplo con 0.95</text>
<text x="86.5" y="459" font-size="13.7" fill="#1a1a1a" textLength="117" lengthAdjust="spacingAndGlyphs" stroke="#1a1a1a" stroke-width="0.25">Desarrollar fórmula</text>
<text x="86.5" y="501" font-size="13.7" fill="#1a1a1a" textLength="70.5" lengthAdjust="spacingAndGlyphs" stroke="#1a1a1a" stroke-width="0.25">1. 75 * 0.90</text>
<text x="86.5" y="521.5" font-size="13.7" fill="#1a1a1a" textLength="64" lengthAdjust="spacingAndGlyphs" stroke="#1a1a1a" stroke-width="0.25">2. 67.5 kW</text>
<rect x="83.5" y="587.3" width="279" height="25" fill="#8cbe4f" />
<text x="141.5" y="606.2" font-size="15.6" fill="#111" textLength="164.5" lengthAdjust="spacingAndGlyphs" font-weight="bold" >Resultado 1 = 67.5 kW</text>
<rect x="83" y="505.300" width="279.500" height="21.200" fill="none" stroke="#1d6846" stroke-width="2"/>
<rect x="359.5" y="522.8" width="6.4" height="6.4" fill="#ffffff" />
<rect x="360.4" y="523.7" width="4.8" height="4.8" fill="#1d6846" />
<rect x="368.6" y="561.3" width="1.6" height="1.6" fill="#3a3a3a" />
<rect x="371.6" y="561.3" width="1.6" height="1.6" fill="#3a3a3a" />
<rect x="374.6" y="561.3" width="1.6" height="1.6" fill="#3a3a3a" />
<path d="M385 571.700h5.600v4.200h4.200v5.600h-4.200v4.200h-5.600v-4.200h-4.200v-5.600h4.200z" stroke="#111" fill="#ffffff" stroke-width="1.5" />
<rect x="506.500" y="423.500" width="385.500" height="61" fill="#ffffff" stroke="#bdbda6" stroke-width="1"/>
<text x="559.4" y="459" font-size="36" fill="#111" textLength="48.4" lengthAdjust="spacingAndGlyphs" style='font-family:"Liberation Serif",serif' stroke="#111" stroke-width="0.45">kW</text>
<text x="620.3" y="459" font-size="36" fill="#111" textLength="22" lengthAdjust="spacingAndGlyphs" style='font-family:"Liberation Serif",serif' stroke="#111" stroke-width="0.45">=</text>
<text x="655.3" y="459" font-size="36" fill="#111" textLength="57.2" lengthAdjust="spacingAndGlyphs" style='font-family:"Liberation Serif",serif' stroke="#111" stroke-width="0.45">kVA</text>
<text x="729.5" y="459" font-size="28" fill="#111" textLength="13.2" lengthAdjust="spacingAndGlyphs" style='font-family:"DejaVu Sans",sans-serif' >∗</text>
<text x="761" y="459" font-size="36" fill="#111" textLength="46.2" lengthAdjust="spacingAndGlyphs" style='font-family:"Liberation Serif",serif' stroke="#111" stroke-width="0.45">cos</text>
<text x="818" y="459" font-size="36" fill="#111" textLength="19.5" lengthAdjust="spacingAndGlyphs" style='font-family:"Liberation Serif",serif' stroke="#111" stroke-width="0.45">θ</text>
<g opacity="0.94">
<ellipse cx="1147.6" cy="545.3" rx="96.3" ry="102" fill="#ffffff" fill-opacity="0.55" stroke="#d1d0d1" stroke-width="20.5"/>
<line x1="1146.6" y1="455.3" x2="1146.6" y2="467" stroke="#2a2a2a" stroke-width="1.5" stroke-linecap="round"/>
<line x1="1107.3" y1="473" x2="1115.3" y2="481.3" stroke="#2a2a2a" stroke-width="1.5" stroke-linecap="round"/>
<line x1="1186.2" y1="472.1" x2="1178.7" y2="480.4" stroke="#2a2a2a" stroke-width="1.5" stroke-linecap="round"/>
<line x1="1092" y1="515" x2="1102.7" y2="515" stroke="#2a2a2a" stroke-width="1.5" stroke-linecap="round"/>
<line x1="1192.2" y1="513.4" x2="1203" y2="513.4" stroke="#2a2a2a" stroke-width="1.5" stroke-linecap="round"/>
<line x1="1108.8" y1="556.6" x2="1116.6" y2="548.5" stroke="#2a2a2a" stroke-width="1.5" stroke-linecap="round"/>
<line x1="1187" y1="555.6" x2="1179" y2="547.2" stroke="#2a2a2a" stroke-width="1.5" stroke-linecap="round"/>
<path d="M1132.5 548 C1132 538 1115.3 534 1115.3 512.4 C1115.3 494 1130 480.6 1147.3 480.6 C1165 480.6 1179.4 494 1179.4 512.4 C1179.4 534 1163.500 538 1163.500 548" stroke="#222" fill="none" stroke-width="2.3" />
<line x1="1124.3" y1="548.4" x2="1170.6" y2="548.4" stroke="#222" stroke-width="2" />
<path d="M1155.2 502 L1140.300 517.5 L1154.7 516.800 L1140.6 532 L1140.6 547.5 M1151.5 531.6 L1151.5 547.5" stroke="#222" fill="none" stroke-width="2.3" />
<path d="M1131.5 549.500 h32.800 v5 c0 9 -7.500 15.500 -16.400 15.500 c-8.900 0 -16.400 -6.500 -16.400 -15.500 z" stroke="#222" fill="#f6b345" stroke-width="1.8" />
<line x1="1132" y1="554.5" x2="1164" y2="554.5" stroke="#222" stroke-width="1.5" />
<line x1="1133" y1="559.5" x2="1163" y2="559.5" stroke="#222" stroke-width="1.5" />
<line x1="1136" y1="564.5" x2="1160" y2="564.5" stroke="#222" stroke-width="1.5" />
<path d="M1077.2 523.3 C1070 530 1064 542 1065.500 552 C1066.500 566 1072 576 1079 583.600 C1084 589 1089 592 1094.700 594.300 C1103 597.500 1111 598.500 1119 602 L1119.500 599 C1114 597 1110 595 1108.300 589.400 C1111 584 1110.500 580 1109.300 577.700 C1107 572 1105 569 1102.500 566 C1098 560 1093 555 1088.900 550.500 C1083 544 1080 540 1079 535 C1078 531 1077.500 527 1077.200 523.300 z" stroke="none" fill="#8ac655" stroke-width="1" />
<path d="M1070.500 537 C1073 560 1088 583 1108 594" stroke="#3f9a2e" fill="none" stroke-width="1.3" />
<path d="M1222.600 520.400 C1224 525 1225 530 1225.900 535 C1227.500 540 1228 544 1227.800 548.600 C1227.500 554 1226.500 559 1224.900 564 C1222.500 571 1219 577 1215.200 581.600 C1211 587 1206 591 1199.700 593.300 C1195 595 1190 595.500 1186 595.200 C1181 595 1176 594 1172.400 592.300 C1174 591.500 1175 591 1176.300 590.400 C1180 588.500 1183.500 585 1186 581.600 C1189 577 1191.500 572 1192.900 568 C1194.500 563 1196 557 1197.700 552.500 C1199.500 548 1202 544 1205.500 540.800 C1209 538 1214 537 1219 536 C1220.500 531 1221.500 526 1222.600 520.400 z" stroke="none" fill="#8ac655" stroke-width="1" />
<path d="M1224 529 C1223 558 1211 581 1190 591" stroke="#3f9a2e" fill="none" stroke-width="1.3" />
<text x="1060.5" y="624.6" font-size="20.5" fill="#6c6a6c" textLength="175" lengthAdjust="spacingAndGlyphs" stroke="#6c6a6c" stroke-width="0.45" transform="translate(0 624.6) scale(1 1.12) translate(0 -624.6)">Soluciones Sustentables</text>
</g>
<rect x="1257" y="220.5" width="2" height="451.79999999999995" fill="#c9c9c9" />
<rect x="1261.3" y="203.5" width="13.5" height="14" fill="#ffffff" stroke="#d0d0d0" stroke-width="0.8"/>
<path d="M1264.300 212.500h7.500l-3.750-4z" stroke="none" fill="#777" stroke-width="1" />
<rect x="1261.3" y="218.5" width="13.5" height="382" fill="#ffffff" stroke="#c9c9c9" stroke-width="0.8"/>
<rect x="1261.3" y="600.5" width="13.5" height="59.5" fill="#d6d6d6" />
<rect x="1261.8" y="660" width="12.5" height="12.3" fill="#ffffff" stroke="#d0d0d0" stroke-width="0.8"/>
<path d="M1264.500 664.500h7l-3.500 3.800z" stroke="none" fill="#777" stroke-width="1" />
<rect x="-10" y="672.3" width="1288" height="28.5" fill="#e4e4e4" />
<rect x="-10" y="671.8" width="1288" height="1.2" fill="#c4c4c4" />
<path d="M30 681.500v8l-4.500-4z" stroke="none" fill="#1d6846" stroke-width="1" />
<path d="M51.500 681.500v8l4.500-4z" stroke="none" fill="#c9c9c9" stroke-width="1" />
<text x="76" y="689" font-size="13" fill="#444" textLength="9.5" lengthAdjust="spacingAndGlyphs" font-weight="bold" >...</text>
<text x="107" y="690" font-size="13" fill="#5a5a5a" textLength="57" lengthAdjust="spacingAndGlyphs" >Watts - HP</text>
<text x="192.5" y="690" font-size="13" fill="#5a5a5a" textLength="42.5" lengthAdjust="spacingAndGlyphs" >kW - HP</text>
<text x="262" y="690" font-size="13" fill="#5a5a5a" textLength="44" lengthAdjust="spacingAndGlyphs" >HP - kW</text>
<text x="332.5" y="690" font-size="13" fill="#5a5a5a" textLength="91" lengthAdjust="spacingAndGlyphs" >Watts - Amperes</text>
<text x="451" y="690" font-size="13" fill="#5a5a5a" textLength="65" lengthAdjust="spacingAndGlyphs" >Watts - KVA</text>
<text x="543.5" y="690" font-size="13" fill="#5a5a5a" textLength="65" lengthAdjust="spacingAndGlyphs" >KVA - Watts</text>
<text x="636" y="690" font-size="13" fill="#5a5a5a" textLength="51.5" lengthAdjust="spacingAndGlyphs" >kW - KVA</text>
<rect x="93.5" y="677" width="1" height="19" fill="#bdbdbd" />
<rect x="178.5" y="677" width="1" height="19" fill="#bdbdbd" />
<rect x="248.5" y="677" width="1" height="19" fill="#bdbdbd" />
<rect x="318.5" y="677" width="1" height="19" fill="#bdbdbd" />
<rect x="438.0" y="677" width="1" height="19" fill="#bdbdbd" />
<rect x="529.5" y="677" width="1" height="19" fill="#bdbdbd" />
<rect x="622.0" y="677" width="1" height="19" fill="#bdbdbd" />
<rect x="892.0" y="677" width="1" height="19" fill="#bdbdbd" />
<rect x="1055.5" y="677" width="1" height="19" fill="#bdbdbd" />
<rect x="701" y="671.8" width="77" height="24" fill="#ffffff" />
<rect x="701" y="694.3" width="77" height="2" fill="#1d6846" />
<text x="712.5" y="690" font-size="13" fill="#1d6846" textLength="53.5" lengthAdjust="spacingAndGlyphs" font-weight="bold" >kVA - kW</text>
<text x="790" y="690" font-size="13" fill="#5a5a5a" textLength="87.5" lengthAdjust="spacingAndGlyphs" >kVAR - Faradios</text>
<text x="904.5" y="690" font-size="13" fill="#5a5a5a" textLength="137.5" lengthAdjust="spacingAndGlyphs" >Faradios - MicroFaradios</text>
<circle cx="1094.500" cy="686.200" r="7" fill="none" stroke="#777" stroke-width="1.3"/>
<path d="M1090.700 686.200h7.600 M1094.500 682.400v7.600" stroke="#777" fill="none" stroke-width="1.3" />
<rect x="1223.2" y="682" width="1.2" height="1.6" fill="#b5b5b5" />
<rect x="1223.2" y="685.3" width="1.2" height="1.6" fill="#b5b5b5" />
<rect x="1223.2" y="688.6" width="1.2" height="1.6" fill="#b5b5b5" />
<rect x="1239.2" y="679.7" width="8.6" height="14" fill="#ffffff" stroke="#cfcfcf" stroke-width="0.8"/>
<rect x="1250.5" y="679.7" width="9.2" height="14" fill="#ffffff" stroke="#cfcfcf" stroke-width="0.8"/>
<path d="M1245.500 683v7.500l-3.800-3.750z" stroke="none" fill="#777" stroke-width="1" />
<path d="M1253.500 683v7.500l3.800-3.750z" stroke="none" fill="#777" stroke-width="1" />
<rect x="-10" y="700.5" width="1288" height="29.5" fill="#f3f3f3" />
<rect x="-10" y="700" width="1288" height="1" fill="#cdcdcd" />
<text x="7.5" y="714" font-size="11.5" fill="#444" textLength="22" lengthAdjust="spacingAndGlyphs" >Listo</text>
<rect x="1011" y="700.5" width="35" height="29.5" fill="#cfcfcf" />
<rect x="1021.500" y="705.500" width="12" height="11" fill="none" stroke="#555" stroke-width="1"/>
<path d="M1025.500 705.500v11 M1029.500 705.500v11 M1021.500 709.200h12 M1021.500 712.800h12" stroke="#555" fill="none" stroke-width="0.9" />
<rect x="1057.500" y="705.500" width="12" height="11" fill="none" stroke="#555" stroke-width="1"/>
<rect x="1060" y="707.800" width="7" height="6.800" fill="none" stroke="#555" stroke-width="0.8"/>
<line x1="1061.5" y1="709.8" x2="1065.5" y2="709.8" stroke="#555" stroke-width="0.8" />
<line x1="1061.5" y1="711.3" x2="1065.5" y2="711.3" stroke="#555" stroke-width="0.8" />
<line x1="1061.5" y1="712.8" x2="1065.5" y2="712.8" stroke="#555" stroke-width="0.8" />
<rect x="1093.500" y="705.500" width="12" height="11" fill="none" stroke="#555" stroke-width="1"/>
<path d="M1093.500 711.500h12 M1097.500 705.500v6 M1100 705.500v6" stroke="#555" fill="none" stroke-width="0.9" />
<line x1="1120.5" y1="711" x2="1127.5" y2="711" stroke="#555" stroke-width="1.3" />
<line x1="1131" y1="711" x2="1224" y2="711" stroke="#b0b0b0" stroke-width="1" />
<rect x="1176" y="705" width="4.5" height="11" fill="#666" />
<path d="M1227.500 711h7 M1231 707.500v7" stroke="#555" fill="none" stroke-width="1.3" />
<text x="1246.3" y="713.7" font-size="11" fill="#444" textLength="23.7" lengthAdjust="spacingAndGlyphs" >100%</text>
<rect x="1278" y="-10" width="12" height="740" fill="#0c0c0c" />
</svg>
</body>
</html>
